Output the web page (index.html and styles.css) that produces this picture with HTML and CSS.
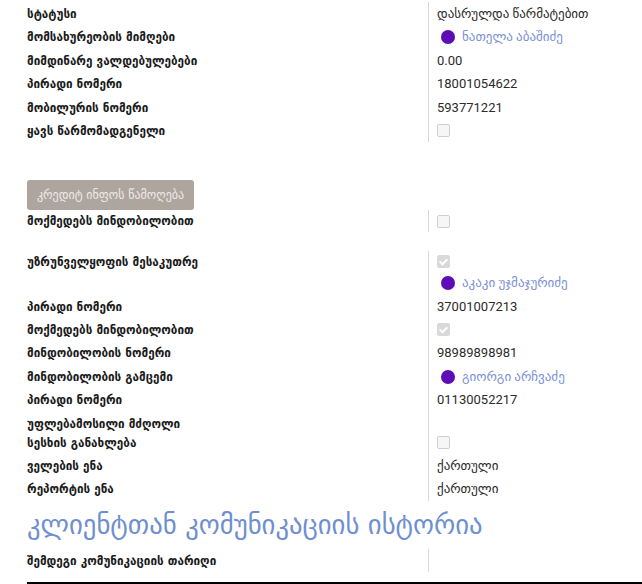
FILE: index.html
```html
<!DOCTYPE html>
<html lang="ka">
<head>
<meta charset="utf-8">
<title>ფორმა</title>
<link rel="stylesheet" href="styles.css">
</head>
<body>
<div class="page">
  <div class="group g1">
    <div class="lbl">სტატუსი</div><div class="val">დასრულდა წარმატებით</div>
    <div class="lbl">მომსახურეობის მიმღები</div><div class="val"><span class="avatar"></span><span class="link">ნათელა აბაშიძე</span></div>
    <div class="lbl">მიმდინარე ვალდებულებები</div><div class="val">0.00</div>
    <div class="lbl">პირადი ნომერი</div><div class="val">18001054622</div>
    <div class="lbl">მობილურის ნომერი</div><div class="val">593771221</div>
    <div class="lbl">ყავს წარმომადგენელი</div><div class="val"><span class="check"></span></div>
  </div>

  <button class="btn" type="button">კრედიტ ინფოს წამოღება</button>

  <div class="group g2">
    <div class="lbl">მოქმედებს მინდობილობით</div><div class="val"><span class="check"></span></div>
  </div>

  <div class="group g3">
    <div class="lbl r-short">უზრუნველყოფის მესაკუთრე</div><div class="val r-short"><span class="check checked"></span></div>
    <div class="lbl"></div><div class="val"><span class="avatar"></span><span class="link">აკაკი უჯმაჯურიძე</span></div>
    <div class="lbl">პირადი ნომერი</div><div class="val">37001007213</div>
    <div class="lbl">მოქმედებს მინდობილობით</div><div class="val"><span class="check checked"></span></div>
    <div class="lbl">მინდობილობის ნომერი</div><div class="val">98989898981</div>
    <div class="lbl">მინდობილობის გამცემი</div><div class="val"><span class="avatar"></span><span class="link">გიორგი არჩვაძე</span></div>
    <div class="lbl">პირადი ნომერი</div><div class="val">01130052217</div>
    <div class="lbl"><span class="wrap">უფლებამოსილი მძღოლი სესხის განახლება</span></div><div class="val bottom"><span class="check"></span></div>
    <div class="lbl">ველების ენა</div><div class="val">ქართული</div>
    <div class="lbl">რეპორტის ენა</div><div class="val">ქართული</div>
  </div>

  <h1 class="title">კლიენტთან კომუნიკაციის ისტორია</h1>

  <div class="group g4">
    <div class="lbl">შემდეგი კომუნიკაციის თარიღი</div><div class="val"></div>
  </div>

  <div class="table-box"></div>
</div>
</body>
</html>
```

FILE: styles.css
```css
html, body {
  margin: 0;
  padding: 0;
  background: #ffffff;
}
body {
  font-family: Roboto, "DejaVu Sans", sans-serif;
  font-size: 13px;
  color: #212529;
  overflow: hidden;
}
.page {
  padding: 2px 0 0 27px;
}
.group {
  display: grid;
  grid-template-columns: 401px 1fr;
}
.lbl {
  font-family: "DejaVu Sans Condensed", "DejaVu Sans", sans-serif;
  font-weight: bold;
  color: #1a1a1a;
  padding: 2px 0;
  line-height: 19.4px;
  min-height: 19.4px;
}
.val {
  border-left: 1px solid #d9d9d9;
  padding: 2px 0 2px 8px;
  line-height: 19.4px;
  display: flex;
  align-items: center;
  color: #2b2b2b;
}
.val.bottom {
  align-items: flex-end;
  padding-bottom: 5px;
}
.wrap {
  display: block;
  width: 175px;
  line-height: 19px;
}
.avatar {
  width: 14px;
  height: 14px;
  border-radius: 50%;
  background: #5c0db5;
  margin-left: 4px;
  margin-right: 7px;
  flex: none;
}
.link {
  color: #7b8fd6;
}
.check {
  display: inline-block;
  box-sizing: border-box;
  width: 13px;
  height: 13px;
  border: 1px solid #cfcfcf;
  border-radius: 2px;
  background: #f6f6f6;
  position: relative;
}
.check.checked {
  background: #d9d9d9;
  border-color: #d9d9d9;
}
.check.checked::after {
  content: "";
  position: absolute;
  left: 3px;
  top: 1px;
  width: 3px;
  height: 6px;
  border: solid #ffffff;
  border-width: 0 2px 2px 0;
  transform: rotate(45deg);
}
.btn {
  display: block;
  margin: 38px 0 0 0;
  width: 167px;
  height: 30px;
  border: none;
  border-radius: 3px;
  background: #aea59f;
  color: #eeeae6;
  font-family: "DejaVu Sans", sans-serif;
  font-size: 12px;
  padding: 0;
}
.g2 .lbl, .g2 .val {
  padding: 1px 0;
}
.g2 .val { padding-left: 8px; }
.g3 {
  margin-top: 19px;
}
.r-short.lbl, .r-short.val {
  padding-top: 1px;
  padding-bottom: 0;
}
.r-short.val { padding-left: 8px; }
.title {
  margin: 6px 0 6px 0;
  font-family: "DejaVu Sans", sans-serif;
  font-weight: normal;
  font-size: 26.7px;
  line-height: 36px;
  color: #6f8fd1;
}
.g4 .val { min-height: 19px; }
.table-box {
  margin-top: 10px;
  height: 20px;
  border: 2px solid #000000;
  border-right: none;
  background: #c9d3f0;
}
```
